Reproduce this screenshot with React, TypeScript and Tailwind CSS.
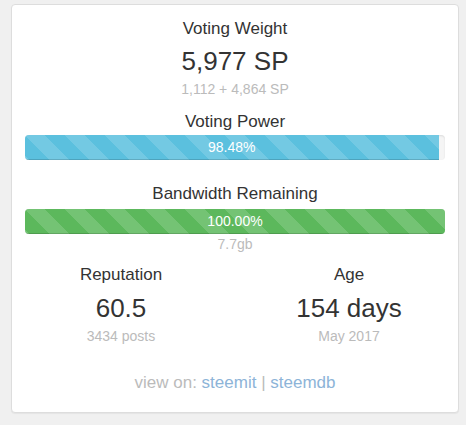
const stripes =
  "bg-[linear-gradient(45deg,rgba(255,255,255,.15)_25%,transparent_25%,transparent_50%,rgba(255,255,255,.15)_50%,rgba(255,255,255,.15)_75%,transparent_75%,transparent)] bg-size-[40px_40px]";

function Bar({ pct, color }: { pct: number; color: string }) {
  return (
    <div className="h-[25px] w-full overflow-hidden rounded-[4px] bg-[#f5f5f5] shadow-[inset_0_1px_2px_rgba(0,0,0,0.1)]">
      <div
        className={`h-full text-center text-[14px] leading-[25px] text-white shadow-[inset_0_-1px_0_rgba(0,0,0,0.15)] ${color} ${stripes}`}
        style={{ width: `${pct}%` }}
      >
        {pct.toFixed(2)}%
      </div>
    </div>
  );
}

export default function App() {
  return (
    <div className="min-h-[425px] w-[466px] bg-[#f0f0f0] pt-[4px] font-['Liberation_Sans',Arial,sans-serif] text-[#333]">
      <div className="mx-[11px] w-[448px] rounded-[4px] border border-[#dddddd] bg-white px-[13px] pb-[19px] pt-[14px] text-center shadow-[0_1px_1px_rgba(0,0,0,0.05)]">
        <div className="text-[17px] leading-[20px]">Voting Weight</div>
        <div className="mt-[7px] text-[26px] leading-[30px]">5,977 SP</div>
        <div className="mt-[3px] text-[14px] leading-[20px] text-[#bbbbbb]">1,112 + 4,864 SP</div>

        <div className="mt-[13px] text-[17px] leading-[20px]">Voting Power</div>
        <div className="mt-[3px]">
          <Bar pct={98.48} color="bg-[#5bc0de]" />
        </div>

        <div className="mt-[24px] text-[17px] leading-[20px]">Bandwidth Remaining</div>
        <div className="mt-[5px]">
          <Bar pct={100} color="bg-[#5cb85c]" />
        </div>
        <div className="text-[14px] leading-[20px] text-[#bbbbbb]">7.7gb</div>

        <div className="-mx-[18px] mt-[11px] grid grid-cols-2">
          <div>
            <div className="text-[17px] leading-[20px]">Reputation</div>
            <div className="mt-[8px] text-[26px] leading-[30px]">60.5</div>
            <div className="mt-[3px] text-[14px] leading-[20px] text-[#bbbbbb]">3434 posts</div>
          </div>
          <div>
            <div className="text-[17px] leading-[20px]">Age</div>
            <div className="mt-[8px] text-[26px] leading-[30px]">154 days</div>
            <div className="mt-[3px] text-[14px] leading-[20px] text-[#bbbbbb]">May 2017</div>
          </div>
        </div>

        <div className="mt-[27px] text-[17px] leading-[20px] text-[#bbbbbb]">
          view on: <a className="text-[#8db4d8]">steemit</a> | <a className="text-[#8db4d8]">steemdb</a>
        </div>
      </div>
    </div>
  );
}
